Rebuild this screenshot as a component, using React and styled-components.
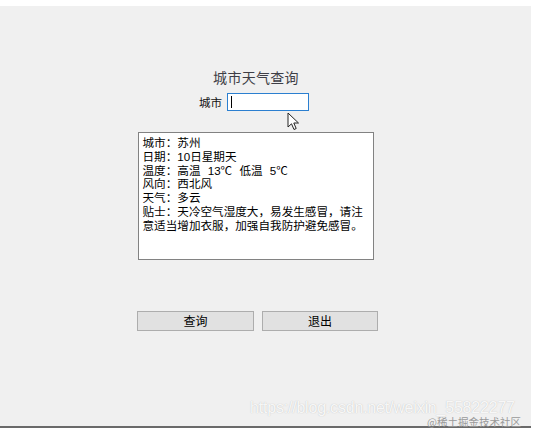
import React from "react";
import styled, { createGlobalStyle } from "styled-components";

const GlobalStyle = createGlobalStyle`
  html, body {
    margin: 0;
    padding: 0;
    background: #ffffff;
  }
  body {
    font-family: "Noto Sans CJK SC", "Liberation Sans", sans-serif;
  }
`;

const LINES = [
  { text: "城市：苏州" },
  { text: "日期：10日星期天" },
  { text: "温度：高温 13℃ 低温 5℃", wide: true },
  { text: "风向：西北风" },
  { text: "天气：多云" },
  { text: "贴士：天冷空气湿度大，易发生感冒，请注" },
  { text: "意适当增加衣服，加强自我防护避免感冒。" },
];

export default function App() {
  return (
    <>
      <GlobalStyle />
      <Screen>
        <Window>
          <Column>
            <Title>城市天气查询</Title>
            <CityRow>
              <Label>城市</Label>
              <Input>
                <Caret />
              </Input>
            </CityRow>
            <Output>
              {LINES.map((line) => (
                <Line key={line.text} $wide={line.wide}>
                  {line.text}
                </Line>
              ))}
            </Output>
            <Buttons>
              <Button $width={117}>查询</Button>
              <Button $width={116}>退出</Button>
            </Buttons>
          </Column>
          <Pointer width="13" height="19" viewBox="0 0 13 19">
            <path
              d="M1 1 L1 15 L4.5 11.8 L7 17.5 L9.2 16.5 L6.8 11 L11.5 11 Z"
              fill="#ffffff"
              stroke="#222"
              strokeWidth="1"
              strokeLinejoin="round"
            />
          </Pointer>
          <Watermark>https://blog.csdn.net/weixin_55822277</Watermark>
          <Credit>@稀土掘金技术社区</Credit>
        </Window>
      </Screen>
    </>
  );
}

const Screen = styled.div`
  width: 536px;
  height: 433px;
  padding-top: 6px;
  box-sizing: border-box;
  overflow: hidden;
`;

const Window = styled.div`
  position: relative;
  width: 531px;
  height: 422px;
  background: #f0f0f0;
  border-bottom: 2px solid #6a6a6a;
  box-sizing: border-box;
`;

const Column = styled.div`
  width: 241px;
  margin-left: 137px;
  padding-top: 62px;
  display: flex;
  flex-direction: column;
  align-items: center;
`;

const Title = styled.div`
  font-size: 14px;
  line-height: 18px;
  letter-spacing: 0.3px;
  color: #3e3e46;
  margin-left: -3px;
`;

const CityRow = styled.div`
  display: flex;
  align-items: center;
  gap: 5px;
  margin-top: 7px;
  margin-left: -7px;
`;

const Label = styled.span`
  font-size: 11.5px;
  color: #111;
`;

const Input = styled.div`
  width: 82px;
  height: 18px;
  box-sizing: border-box;
  background: #fff;
  border: 1px solid #2b7fd0;
  display: flex;
  align-items: center;
  padding-left: 3px;
`;

const Caret = styled.span`
  width: 1px;
  height: 12px;
  background: #000;
`;

const Output = styled.div`
  width: 236px;
  height: 128px;
  box-sizing: border-box;
  margin-top: 21px;
  margin-left: -4px;
  background: #fff;
  border: 1px solid #828282;
  padding: 3px 4px;
  font-family: "Liberation Sans", "Noto Sans CJK SC", sans-serif;
  font-size: 11.6px;
  line-height: 13.8px;
  color: #000;
`;

const Line = styled.div`
  white-space: nowrap;
  word-spacing: ${(p) => (p.$wide ? "4px" : "0")};
`;

const Buttons = styled.div`
  display: flex;
  gap: 8px;
  margin-top: 51px;
`;

const Button = styled.button`
  width: ${(p) => p.$width}px;
  height: 20px;
  padding: 0;
  background: #e1e1e1;
  border: 1px solid #adadad;
  font-family: "Noto Sans CJK SC", "Liberation Sans", sans-serif;
  font-size: 12px;
  line-height: 18px;
  color: #000;
`;

const Pointer = styled.svg`
  position: absolute;
  left: 287px;
  top: 106px;
`;

const Watermark = styled.div`
  position: absolute;
  left: 250px;
  top: 393px;
  font-family: "Liberation Sans", sans-serif;
  font-size: 16px;
  letter-spacing: -0.2px;
  color: rgba(255, 255, 255, 0.9);
  text-shadow: 0 0 1px rgba(160, 160, 160, 0.7);
  white-space: nowrap;
`;

const Credit = styled.div`
  position: absolute;
  right: 10px;
  top: 410px;
  font-size: 10.5px;
  line-height: 12px;
  color: #9a9a9a;
  white-space: nowrap;
`;
